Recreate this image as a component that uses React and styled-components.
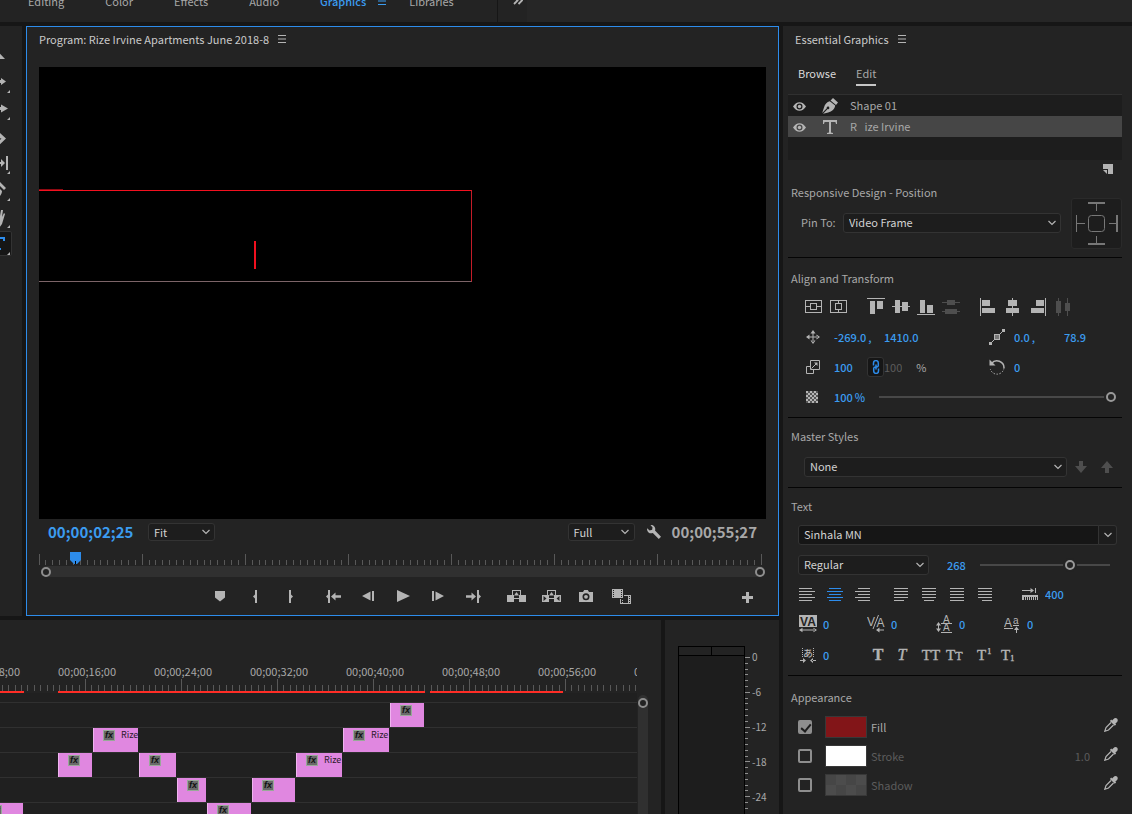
import { useState } from 'react';
import styled, { createGlobalStyle, css } from 'styled-components';

const GlobalStyle = createGlobalStyle`
  * {
    box-sizing: border-box;
  }

  body {
    margin: 0;
    background: #161616;
    color: #a8a8a8;
    font-family: 'Noto Sans CJK JP', 'Noto Sans', sans-serif;
    font-size: 11px;
    line-height: 16px;
    overflow: hidden;
  }

  button,
  input,
  select {
    font: inherit;
    color: inherit;
    margin: 0;
    padding: 0;
    border: 0;
    background: none;
  }

  svg {
    display: block;
    flex: none;
  }
`;

/* ---------- shell ---------- */

const Page = styled.div`
  display: flex;
  flex-direction: column;
  height: 100vh;
`;

const TopBar = styled.nav`
  display: flex;
  align-items: center;
  height: 40px;
  margin: -18px 0 4px;
  flex: none;
  background: #262626;
`;

const WorkspaceTabs = styled.div`
  display: flex;
  align-items: center;
  gap: 41px;
  height: 100%;
  padding: 0 43px 2px 28px;
  background: #232323;
  border-right: 1px solid #161616;
`;

const WorkspaceTab = styled.button`
  display: flex;
  align-items: center;
  gap: 12px;
  color: ${({ $active }) => ($active ? '#3b9cf0' : '#a8a8a8')};
  font-weight: ${({ $active }) => ($active ? 500 : 400)};
  margin-right: ${({ $active }) => ($active ? '-18px' : '0')};
`;

const MoreButton = styled.button`
  height: 100%;
  padding: 0 4px 2px 15px;
  background: #232323;
  color: #b4b4b4;
`;

const Main = styled.main`
  flex: 1;
  min-height: 0;
  display: flex;
  gap: 4px;
`;

const LeftArea = styled.div`
  flex: 1;
  min-width: 0;
  display: flex;
  flex-direction: column;
  gap: 4px;
`;

const UpperRow = styled.div`
  flex: 1;
  min-height: 0;
  display: flex;
  gap: 4px;
`;

const LowerRow = styled.div`
  height: 194px;
  display: flex;
  gap: 4px;
`;

/* ---------- tools ---------- */

const Toolbar = styled.div`
  width: 22px;
  flex: none;
  overflow: hidden;
  padding-top: 16px;
  display: flex;
  flex-direction: column;
  gap: 2px;
  background: #232323;
`;

const ToolButton = styled.button`
  width: 26px;
  height: 25px;
  flex: none;
  margin-left: -14px;
  border-radius: 2px;
  color: ${({ $active }) => ($active ? '#2d8ceb' : '#b4b4b4')};
  ${({ $active }) => $active && css`
    background: #161616;
    box-shadow: inset 0 0 0 1px #333;
  `}
`;

/* ---------- program monitor ---------- */

const PanelHeader = styled.header`
  display: flex;
  align-items: center;
  gap: 9px;
  height: 28px;
  flex: none;
  padding-bottom: 2px;
  color: #cacaca;
`;

const Program = styled.section`
  flex: 1;
  min-width: 0;
  display: flex;
  flex-direction: column;
  padding: 0 12px;
  background: #232323;
  border: 1px solid #2d8ceb;

  ${PanelHeader} {
    height: 26px;
  }
`;

const Heading = styled.h2`
  margin: 0;
  font-size: 11px;
  font-weight: 400;
`;

const MenuButton = styled.button`
  color: #b4b4b4;
`;

const Video = styled.div`
  position: relative;
  flex: 1;
  min-height: 0;
  margin-top: 14px;
  background: #000;
  overflow: hidden;
`;

const TextFrame = styled.div`
  position: absolute;
  left: 0;
  top: 123px;
  width: 433px;
  height: 92px;
  border: 1px solid #7c6468;
  border-top-color: #f3101f;
  border-right-color: #c41c28;
  border-left: 0;
`;

const TextFrameLead = styled.div`
  position: absolute;
  left: 0;
  top: -2px;
  width: 24px;
  height: 1px;
  background: #8d0a12;
`;

const Caret = styled.div`
  position: absolute;
  left: 215px;
  top: 50px;
  width: 2px;
  height: 28px;
  background: #f0101f;
`;

const MonitorInfo = styled.div`
  display: flex;
  align-items: center;
  height: 25px;
  flex: none;
  padding: 0 9px;
`;

const Timecode = styled.span`
  font-size: 15px;
  font-weight: 700;
  color: ${({ $active }) => ($active ? '#3b9cf0' : '#a8a8a8')};
  min-width: ${({ $active }) => ($active ? '100px' : '0')};
`;

const Spacer = styled.div`
  flex: ${({ $width }) => ($width ? `0 0 ${$width}px` : 1)};
`;

const WrenchButton = styled.button`
  margin: 0 11px 0 12px;
  color: #b4b4b4;
`;

const MonitorRuler = styled.div`
  position: relative;
  height: 22px;
  flex: none;
  padding: 10px 5px 0 0;
`;

const Playhead = styled.svg`
  position: absolute;
  top: 8px;
  left: 31px;
`;

const ZoomBar = styled.div`
  display: flex;
  justify-content: space-between;
  align-items: center;
  height: 11px;
  flex: none;
  margin: 0 1px 0 2px;
  background: #303030;
  border-radius: 6px;
`;

const Knob = styled.div`
  width: 10px;
  height: 10px;
  border: 2px solid #8e8e8e;
  border-radius: 50%;
  background: #232323;
`;

const Transport = styled.div`
  display: flex;
  align-items: center;
  height: 38px;
  flex: none;
`;

const TransportButtons = styled.div`
  flex: 1;
  display: flex;
  justify-content: center;
  gap: 8px;
  padding-left: 74px;
`;

const TransportGroup = styled.div`
  display: flex;
`;

const IconButton = styled.button`
  width: ${({ $width }) => $width || 35}px;
  height: 24px;
  display: flex;
  align-items: center;
  justify-content: center;
  color: ${({ $active, disabled }) => {
    if (disabled) return '#4e4e4e';
    return $active ? '#2d8ceb' : '#b4b4b4';
  }};
`;

/* ---------- form parts ---------- */

const SelectBox = styled.label`
  position: relative;
  display: block;
  flex: ${({ $width }) => ($width ? 'none' : 1)};
  width: ${({ $width }) => ($width ? `${$width}px` : 'auto')};
  height: ${({ $height }) => $height || 20}px;
  color: #d2d2d2;

  select {
    appearance: none;
    display: block;
    width: 100%;
    height: 100%;
    padding: 0 24px 2px 5px;
    background: ${({ $split }) => ($split ? '#161616' : '#1d1d1d')};
    border: 1px solid #333;
    border-radius: 3px;
  }
`;

const SelectArrow = styled.span`
  position: absolute;
  top: 0;
  right: 0;
  bottom: 0;
  width: 19px;
  display: flex;
  align-items: center;
  justify-content: center;
  pointer-events: none;
  color: #b4b4b4;
  ${({ $split }) => $split && css`
    background: #1d1d1d;
    border: 1px solid #333;
    border-radius: 0 3px 3px 0;
  `}
`;

const HotInput = styled.input`
  field-sizing: content;
  height: 16px;
  outline: 0;
  color: #3b9cf0;
  font-weight: 500;

  &:disabled {
    color: #5c5c5c;
    font-weight: 400;
  }
`;

const Slider = styled.input`
  appearance: none;
  flex: ${({ $width }) => ($width ? 'none' : 1)};
  width: ${({ $width }) => ($width ? `${$width}px` : 'auto')};
  min-width: 0;
  height: 12px;

  &::-webkit-slider-runnable-track {
    height: 2px;
    background: #484848;
  }

  &::-webkit-slider-thumb {
    appearance: none;
    width: 10px;
    height: 10px;
    margin-top: -4px;
    border: 2px solid #999;
    border-radius: 50%;
    background: #232323;
    box-shadow: 0 0 0 2px #232323;
  }
`;

const Checkbox = styled.input`
  appearance: none;
  position: relative;
  width: 14px;
  height: 14px;
  border: 2px solid #8e8e8e;
  border-radius: 2px;

  &:checked {
    background: #8e8e8e;
  }

  &:checked::after {
    content: '';
    position: absolute;
    left: 3px;
    top: 0;
    width: 4px;
    height: 8px;
    border: solid #1d1d1d;
    border-width: 0 2px 2px 0;
    transform: rotate(40deg);
  }
`;

/* ---------- timeline ---------- */

const Timeline = styled.section`
  flex: 1;
  min-width: 0;
  display: flex;
  padding-right: 13px;
  background: #232323;
`;

const TimelineBody = styled.div`
  flex: 1;
  min-width: 0;
  overflow: hidden;
  padding-top: 44px;
`;

const RulerLabels = styled.div`
  display: flex;
  height: 15px;
  margin-left: -57px;
  line-height: 14px;
`;

const RulerLabel = styled.span`
  width: 96px;
  flex: none;
  text-align: center;
`;

const Tracks = styled.div`
  padding-top: 9px;
  background: #202020;
`;

const Track = styled.div`
  position: relative;
  height: 25px;
  border-top: 1px solid #303030;
`;

const Clip = styled.div`
  position: absolute;
  top: 0;
  height: 24px;
  display: flex;
  align-items: flex-start;
  gap: 6px;
  padding: 2px 0 0 9px;
  overflow: hidden;
  background: #e087e0;
  border-left: 1px solid #f0b4f0;
  color: #2c1a2c;
  font-size: 9px;
  line-height: 10px;
`;

const FxBadge = styled.span`
  width: 12px;
  height: 11px;
  flex: none;
  background: #6a6a6a;
  border: 1px solid #98a898;
  color: #111;
  font-family: 'Liberation Sans', sans-serif;
  font-size: 9px;
  font-style: italic;
  font-weight: 700;
  line-height: 9px;
  text-align: center;
`;

const TrackScroll = styled.div`
  width: 10px;
  margin: 75px 0 0 1px;
  padding-top: 3px;
  background: #303030;
  border-radius: 5px 5px 0 0;
`;

/* ---------- audio meter ---------- */

const Meter = styled.section`
  width: 114px;
  display: flex;
  padding: 26px 0 0 13px;
  background: #232323;
`;

const MeterBox = styled.div`
  width: 67px;
  background: #1d1d1d;
  border: 1px solid #000;
  border-bottom: 0;
`;

const MeterPeaks = styled.div`
  display: grid;
  grid-template-columns: 32px 1fr;
  height: 9px;
  background: #232323;
  border-bottom: 1px solid #000;

  span + span {
    border-left: 1px solid #000;
  }
`;

const MeterLabels = styled.div`
  display: flex;
  flex-direction: column;
  gap: 21px;
  padding: 4px 0 0 1px;
  font-size: 10px;
  line-height: 14px;
`;

/* ---------- essential graphics ---------- */

const Graphics = styled.aside`
  width: 349px;
  flex: none;
  padding: 0 10px 0 5px;
  overflow: hidden;
  background: #232323;

  ${PanelHeader} {
    padding-left: 7px;
  }
`;

const Tabs = styled.div`
  display: flex;
  align-items: center;
  gap: 20px;
  height: 40px;
  padding-left: 10px;
`;

const Tab = styled.button`
  height: 24px;
  color: ${({ $active }) => ($active ? '#a8a8a8' : '#dadada')};
  border-bottom: 2px solid ${({ $active }) => ($active ? '#c6c6c6' : 'transparent')};
`;

const Layers = styled.div`
  min-height: 66px;
  background: #1d1d1d;
  border-top: 1px solid #303030;
`;

const Layer = styled.div`
  display: grid;
  grid-template-columns: 23px 37px 1fr;
  align-items: center;
  height: 21px;
  background: ${({ $selected }) => ($selected ? '#464646' : 'transparent')};
`;

const LayerIcon = styled.span`
  display: flex;
  justify-content: center;
  color: #b4b4b4;
`;

const LayerName = styled.span`
  padding: 0 0 2px 2px;
  white-space: pre;
`;

const LayerActions = styled.div`
  display: flex;
  justify-content: flex-end;
  height: 23px;
  padding: 4px 9px;
  color: #b4b4b4;
`;

const Section = styled.section`
  padding: ${({ $pad }) => $pad || '9px 0 0'};
  border-bottom: ${({ $last }) => ($last ? '0' : '1px solid #050505')};
`;

const SectionTitle = styled.h3`
  margin: 0;
  padding: 0 0 2px 3px;
  font-size: 11px;
  font-weight: 400;
  line-height: 18px;
`;

const Pinning = styled.div`
  display: flex;
  gap: 10px;
  height: 74px;
`;

const PinningFields = styled.div`
  flex: 1;
`;

const PinBox = styled.div`
  width: 51px;
  height: 51px;
  margin-top: 15px;
  background: #1d1d1d;
  border: 1px solid #2a2a2a;
  border-radius: 3px;
  color: #777;
`;

const Row = styled.div`
  display: flex;
  align-items: center;
  height: ${({ $height }) => $height || 30}px;
  margin-top: ${({ $top }) => $top || 0}px;
  padding: ${({ $pad }) => $pad || '0'};
`;

const PinLabel = styled.span`
  width: 42px;
  padding-bottom: 2px;
`;

const ButtonGroup = styled.div`
  display: flex;
  margin-right: ${({ $gap }) => $gap || 0}px;
`;

const TransformGrid = styled.div`
  display: grid;
  grid-template-columns: 183px 1fr;
  grid-auto-rows: 30px;
  padding-left: 18px;
`;

const Field = styled.div`
  display: flex;
  align-items: center;
  grid-column: ${({ $wide }) => ($wide ? '1 / -1' : 'auto')};
`;

const FieldIcon = styled.span`
  width: ${({ $width }) => $width || 28}px;
  flex: none;
  display: flex;
  justify-content: ${({ $center }) => ($center ? 'center' : 'flex-start')};
  color: #b4b4b4;
`;

const Value = styled.span`
  display: flex;
  align-items: center;
  width: ${({ $width }) => $width || 50}px;
  gap: ${({ $gap }) => $gap || 0}px;
  color: #3b9cf0;
  font-weight: 500;
`;

const LinkButton = styled.button`
  width: 17px;
  height: 20px;
  display: flex;
  align-items: center;
  justify-content: center;
  background: #161616;
  border: 1px solid #333;
  border-radius: 3px;
  color: #2d8ceb;
`;

const Percent = styled.span`
  margin-left: 14px;
`;

const AppearanceRows = styled.div`
  padding-top: 4px;
`;

const AppearanceRow = styled.div`
  display: flex;
  align-items: center;
  height: 29px;
  padding: 0 4px 0 10px;
  color: ${({ $on }) => ($on ? '#a8a8a8' : '#5c5c5c')};
`;

const Swatch = styled.button`
  width: 42px;
  height: 22px;
  margin: 0 4px 0 13px;
  border: 1px solid #383838;
  background: ${({ $fill }) => $fill};
`;

const StrokeWidth = styled(HotInput)`
  margin-right: 14px;
`;

const DropperButton = styled.button`
  padding-bottom: 4px;
  color: #b4b4b4;
`;

/* ---------- icons ---------- */

const Icon = ({ w, h, children }) => (
  <svg width={w} height={h} viewBox={`0 0 ${w} ${h}`} fill="currentColor" aria-hidden="true">
    {children}
  </svg>
);

const stroke = { fill: 'none', stroke: 'currentColor' };
const crisp = { shapeRendering: 'crispEdges' };

const MenuIcon = () => (
  <Icon w={8} h={8}>
    <path d="M0 0h8v1H0zM0 3.500h8v1H0zM0 7h8v1H0z" />
  </Icon>
);

const Chevron = () => (
  <Icon w={8} h={6}>
    <path d="M.5 1 4 4.500 7.500 1" {...stroke} strokeWidth="1.200" />
  </Icon>
);

const EyeIcon = () => (
  <Icon w={13} h={11}>
    <path fillRule="evenodd" d="M0 6.500C1.800 3.700 4 2.200 6.500 2.200S11.200 3.700 13 6.500C11.200 9.300 9 10.800 6.500 10.800S1.800 9.300 0 6.500zM6.500 3.500a3 3 0 1 0 0 6 3 3 0 0 0 0-6z" />
    <circle cx="6.500" cy="6.500" r="1.700" />
  </Icon>
);

const PenIcon = () => (
  <Icon w={16} h={16}>
    <path d="m11 0 5 4.500-2 2.500-5.500-4.500zM7.800 3.300l5.400 4.200c-.5 3.400-3.200 6.200-7 7L1 15.800l4.700-4.700a1.300 1.300 0 1 0-.9-.8L.2 15 2 9.500c.8-3.300 2.800-5.400 5.800-6.200z" />
  </Icon>
);

const TypeIcon = () => (
  <Icon w={14} h={14}>
    <path d="M0 0h14v4h-1l-.6-2H8v10.500l2 .5v1H4v-1l2-.5V2H1.600L1 4H0z" />
  </Icon>
);

const NewLayerIcon = () => (
  <Icon w={10} h={10}>
    <path d="M0 0h10v10H5V5H0z" />
    <path d="M0 6h4v4z" />
  </Icon>
);

const PinIcon = () => (
  <svg width="49" height="49" viewBox="0 0 49 49" fill="currentColor" aria-hidden="true">
    <rect x="16.5" y="16.5" width="16" height="16" rx="3" {...stroke} />
    <path {...crisp} d="M16 3h17v2H16zM24 5h1v7h-1zM16 44h17v2H16zM24 37h1v7h-1zM4 16h1v17H4zM5 24h8v1H5zM44 16h2v17h-2zM37 24h7v1h-7z" />
  </svg>
);

const alignFrame = [
  {
    label: 'Center vertically in frame',
    icon: <Icon w={17} h={13}><path {...stroke} {...crisp} d="M.5.5h16v12H.5zM5.500 3.500h6v6h-6zM1 6.500h4M12 6.500h4" /></Icon>,
  },
  {
    label: 'Center horizontally in frame',
    icon: <Icon w={17} h={13}><path {...stroke} {...crisp} d="M.5.5h16v12H.5zM5.500 3.500h6v6h-6zM8.500 1v2M8.500 10v2" /></Icon>,
  },
];

const alignVertical = [
  { label: 'Align top', d: 'M0 0h18v1H0zM3 3h5v13H3zM10 3h6v8h-6z' },
  { label: 'Align vertical centers', d: 'M0 8h18v1H0zM3 2h5v13H3zM10 4h6v9h-6z' },
  { label: 'Align bottom', d: 'M0 16h18v1H0zM3 2h5v13H3zM10 7h6v8h-6z' },
  { label: 'Distribute vertically', d: 'M0 4h18v1H0zM5 2h8v5H5zM0 13h18v1H0zM3 11h12v5H3z', disabled: true },
];

const alignHorizontal = [
  { label: 'Align left', d: 'M1 0h1v18H1zM3 2h8v6H3zM3 10h13v5H3z' },
  { label: 'Align horizontal centers', d: 'M8 0h1v18H8zM4 2h9v6H4zM2 10h13v5H2z' },
  { label: 'Align right', d: 'M16 0h1v18h-1zM7 2h8v6H7zM2 10h13v5H2z' },
  { label: 'Distribute horizontally', d: 'M4 0h1v18H4zM2 3h5v12H2zM13 0h1v18h-1zM11 5h5v8h-5z', disabled: true },
];

const PositionIcon = () => (
  <Icon w={14} h={14}>
    <path d="M6.500 2h1v10h-1zM2 6.500h10v1H2zM7 0l2.500 3.500h-5zM7 14l2.500-3.500h-5zM0 7l3.500-2.500v5zM14 7l-3.500-2.500v5z" />
  </Icon>
);

const AnchorIcon = () => (
  <Icon w={16} h={16}>
    <path d="M1 15 15 1" {...stroke} />
    <path d="M0 13h3v3H0zM13 0h3v3h-3z" />
    <rect x="5.500" y="5.500" width="5" height="5" fill="#777" stroke="currentColor" />
  </Icon>
);

const ScaleIcon = () => (
  <Icon w={14} h={14}>
    <path {...stroke} d="M4.500.5h9v9h-9zM4.500 6.500h-4v7h7v-4M5.500 8.500 10.500 3.500" />
    <path d="M8 2.500h3.500V6z" />
  </Icon>
);

const LinkIcon = () => (
  <Icon w={8} h={14}>
    <path {...stroke} strokeWidth="1.500" d="M1.500 5.500V3a2.300 2.300 0 0 1 4.800 0v2.500c0 1-.8 1.500-1.800 1.500M6.500 8.500V11a2.300 2.300 0 0 1-4.800 0V8.500C1.700 7.500 2.500 7 3.500 7M4 4.500v5" />
  </Icon>
);

const RotateIcon = () => (
  <Icon w={16} h={17}>
    <path {...stroke} strokeWidth="1.500" d="M2.500 4.500A7 7 0 0 1 15 9" />
    <path {...stroke} strokeDasharray="1.500 1.500" d="M15 9A7 7 0 0 1 1.300 10" />
    <path d="M.5.5v6h6z" />
  </Icon>
);

const OpacityIcon = () => {
  const cells = [];
  for (let y = 0; y < 6; y += 1) {
    for (let x = 0; x < 6; x += 1) {
      cells.push(<rect key={`${x}-${y}`} x={x * 2} y={y * 2} width="2" height="2" opacity={(x + y) % 2 ? 0.35 : 1} />);
    }
  }
  return <Icon w={12} h={12}>{cells}</Icon>;
};

const ArrowDown = () => (
  <Icon w={12} h={12}><path d="M4 0h4v5h4l-6 7-6-7h4z" /></Icon>
);

const ArrowUp = () => (
  <Icon w={12} h={12}><path d="M4 12h4V7h4L6 0 0 7h4z" /></Icon>
);

// each entry is [x, width] of one text line
const Lines = ({ rows }) => (
  <Icon w={16} h={13}>
    {rows.map(([x, width], i) => (
      <rect key={i} x={x} y={i * 3} width={width} height="1" {...crisp} />
    ))}
  </Icon>
);

const paragraphAligns = [
  { label: 'Left align text', rows: [[0, 13], [0, 16], [0, 13], [0, 16], [0, 13]] },
  { label: 'Center align text', rows: [[2, 12], [0, 16], [2, 12], [0, 16], [2, 12]] },
  { label: 'Right align text', rows: [[3, 12], [0, 15], [3, 12], [0, 15], [3, 12]] },
];

const paragraphJustifies = [
  { label: 'Justify last left', rows: [[1, 14], [1, 14], [1, 14], [1, 14], [1, 10]] },
  { label: 'Justify last centered', rows: [[1, 14], [1, 14], [1, 14], [1, 14], [3, 10]] },
  { label: 'Justify all', rows: [[1, 14], [1, 14], [1, 14], [1, 14], [1, 14]] },
  { label: 'Justify last right', rows: [[1, 14], [1, 14], [1, 14], [1, 14], [5, 10]] },
];

const TabWidthIcon = () => (
  <Icon w={16} h={13}>
    <path d="M0 2h10v1H0zM8.500 0 12 2.500 8.500 5zM13 0h1v5h-1z" />
    <path {...crisp} d="M0 7h16v5h-1v-3h-1v3h-1v-3h-1v3h-1v-3h-1v3H9v-3H8v3H7v-3H6v3H5v-3H4v3H3v-3H2v3H0z" />
  </Icon>
);

const glyph = { fontFamily: 'Liberation Sans, sans-serif' };

const TrackingIcon = () => (
  <Icon w={18} h={18}>
    <rect width="18" height="12" />
    <text x="9" y="10.500" textAnchor="middle" fontSize="12" fill="#232323" fontWeight="700" {...glyph}>VA</text>
    <path d="M2 14.500h14v1H2zM3.500 12.700v4.600L0 15zM14.500 12.700v4.600L18 15z" />
  </Icon>
);

const KerningIcon = () => (
  <Icon w={18} h={18}>
    <text x="0" y="11" fontSize="12" {...glyph}>V</text>
    <text x="9.500" y="12" fontSize="12" {...glyph}>A</text>
    <path {...stroke} d="M6 14 11.500 0" />
    <path d="M11 14.500h6v1h-6zM12.500 12.500v5L9 15z" />
  </Icon>
);

const LeadingIcon = () => (
  <Icon w={16} h={18}>
    <text x="7" y="7.500" fontSize="10" {...glyph}>A</text>
    <text x="7" y="16" fontSize="10" {...glyph}>A</text>
    <path {...crisp} d="M5 8h11v1H5zM5 17h11v1H5zM2 9h1v6H2z" />
    <path d="M0 10.500h5L2.500 7zM0 13.500h5L2.500 17z" />
  </Icon>
);

const BaselineIcon = () => (
  <Icon w={16} h={17}>
    <text x="0" y="11" fontSize="12" {...glyph}>A</text>
    <text x="9" y="8" fontSize="10" {...glyph}>a</text>
    <path {...crisp} d="M0 12h9v1H0zM9 9h6v1H9zM12 12h1v5h-1z" />
    <path d="M10 14h5l-2.500-3.500z" />
  </Icon>
);

const TsumeIcon = () => (
  <Icon w={16} h={15}>
    <path {...stroke} strokeDasharray="1 1" d="M2.500 0v10M13.500 0v10" />
    <text x="8" y="9" fontSize="10" textAnchor="middle" fontFamily="Noto Sans CJK JP, sans-serif">あ</text>
    <path d="M0 12h4v1H0zM3 10l3 2.500L3 15zM12 12h4v1h-4zM13 10l-3 2.500 3 2.500z" />
  </Icon>
);

const serif = { fontFamily: 'Liberation Serif, serif', fill: 'currentColor', stroke: 'currentColor', strokeWidth: '0.4' };

const textStyles = [
  [
    { label: 'Faux bold', icon: <Icon w={20} h={14}><text x="10" y="12" textAnchor="middle" fontSize="16" fontWeight="700" {...serif}>T</text></Icon> },
    { label: 'Faux italic', icon: <Icon w={20} h={14}><text x="10" y="12" textAnchor="middle" fontSize="16" fontStyle="italic" {...serif}>T</text></Icon> },
  ],
  [
    { label: 'All caps', icon: <Icon w={20} h={14}><text x="10" y="12" textAnchor="middle" fontSize="15" {...serif}>TT</text></Icon> },
    { label: 'Small caps', icon: <Icon w={20} h={14}><text x="1" y="12" fontSize="15" {...serif}>T<tspan fontSize="12">T</tspan></text></Icon> },
  ],
  [
    { label: 'Superscript', icon: <Icon w={20} h={14}><text x="3" y="12" fontSize="15" {...serif}>T<tspan fontSize="8" dx="1" dy="-6">1</tspan></text></Icon> },
    { label: 'Subscript', icon: <Icon w={20} h={14}><text x="3" y="12" fontSize="15" {...serif}>T<tspan fontSize="8" dy="1">1</tspan></text></Icon> },
  ],
];

const DropperIcon = () => (
  <Icon w={14} h={14}>
    <path d="M9.300 1.200c1.300-1.500 3-1.500 3.900-.5s.7 2.600-.6 3.900l-1.200 1 .7.8-1.300 1.300-4.900-4.800 1.300-1.300.9.8z" />
    <path {...stroke} strokeWidth="1.200" d="M7 4.500 2 9.500.8 13.200 4.500 12 9.500 7" />
  </Icon>
);

const WrenchIcon = () => (
  <Icon w={14} h={14}>
    <path d="M3.500.2A4 4 0 0 1 8 5.500l6 6.200-2.200 2.200-6-6A4 4 0 0 1 .2 3.300L2.600 5.400l2.600-.6.3-2.500z" />
  </Icon>
);

const transport = [
  [
    { label: 'Add marker', icon: <Icon w={10} h={11}><path d="M0 0h10v6.500L5 10.500 0 6.500z" /></Icon> },
    { label: 'Mark in', icon: <Icon w={5} h={13}><path d="M2 0h2v13H2V8.500L0 6.500l2-2z" /></Icon> },
    { label: 'Mark out', icon: <Icon w={5} h={13}><path d="M3 0H1v13h2V8.500l2-2-2-2z" /></Icon> },
  ],
  [
    { label: 'Go to in', icon: <Icon w={15} h={13}><path d="M2 0h2v13H2V8.500L0 6.500l2-2zM5 6.500 9.500 2.500v2.700H15v2.600H9.500v2.700z" /></Icon> },
    { label: 'Step back', icon: <Icon w={12} h={10}><path d="M0 5 8.500.5v9zM10 0h2v10h-2z" /></Icon> },
    { label: 'Play', icon: <Icon w={13} h={12}><path d="M0 0 13 6 0 12z" /></Icon> },
    { label: 'Step forward', icon: <Icon w={12} h={10}><path d="M12 5 3.500.5v9zM0 0h2v10H0z" /></Icon> },
    { label: 'Go to out', icon: <Icon w={15} h={13}><path d="M13 0h-2v13h2V8.500l2-2-2-2zM10 6.500 5.500 2.500v2.700H0v2.600h5.500v2.700z" /></Icon> },
  ],
  [
    {
      label: 'Lift',
      icon: (
        <Icon w={19} h={13}>
          <path d="M0 5h7v7H0zM12 5h7v7h-7zM9.500 2 7 5.500h5zM7 8h5v1H7z" />
          <path {...stroke} {...crisp} d="M5.500 5V.5h8V5" />
        </Icon>
      ),
    },
    {
      label: 'Extract',
      icon: (
        <Icon w={19} h={13}>
          <path fillRule="evenodd" d="M0 5h7v7H0zM1.500 6v5L4.500 8.500zM12 5h7v7h-7zM17.500 6v5l-3-2.500zM9.500 2 7 5.500h5zM7 8h5v1H7z" />
          <path {...stroke} {...crisp} d="M5.500 5V.5h8V5" />
        </Icon>
      ),
    },
    {
      label: 'Export frame',
      icon: (
        <Icon w={14} h={12}>
          <path fillRule="evenodd" d="M0 2h4l1.200-2h3.600L10 2h4v10H0zM7 3.300a3.500 3.500 0 1 0 0 7 3.500 3.500 0 0 0 0-7z" />
          <circle cx="7" cy="6.800" r="1.900" />
        </Icon>
      ),
    },
    {
      label: 'Comparison view',
      icon: (
        <Icon w={19} h={15}>
          <path fillRule="evenodd" d="M0 0h11v9H0zM1 1v1h1V1zM1 3v1h1V3zM1 5v1h1V5zM1 7v1h1V7zM9 1v1h1V1zM9 3v1h1V3zM9 5v1h1V5zM9 7v1h1V7z" />
          <path fillRule="evenodd" d="M12 6h7v9H8v-5h1v4h1v-1h1v1h5V7h-4zM17 7v1h1V7zM17 9v1h1V9zM17 11v1h1v-1zM17 13v1h1v-1zM10 11h1v1h-1z" />
        </Icon>
      ),
    },
  ],
];

const PlusIcon = () => (
  <Icon w={11} h={13}><path d="M4 2h3v4h4v3H7v4H4V9H0V6h4z" /></Icon>
);

const MoreIcon = () => (
  <Icon w={10} h={8}>
    <path {...stroke} strokeWidth="1.800" d="M1 0l3.500 3.500L1 7M5.500 0 9 3.500 5.500 7" />
  </Icon>
);

const corner = 'M24 21v3h-3z';

const tools = [
  { label: 'Selection', body: <path d="M5 2 19 17h-8l-6 6z" /> },
  { label: 'Track select forward', body: <path d={`M2 11h13V9l5 3.500-5 3.500v-2H2z${corner}`} /> },
  { label: 'Ripple edit', body: <path d={`M2 11h13V8.500l7 4-7 4V14H2z${corner}`} /> },
  { label: 'Razor', body: <path fillRule="evenodd" d="M3 17 12 8l8 7.500L11 24zM13 15v3l2.500-2.500z" /> },
  { label: 'Slip', body: <path d={`M4 12h11V9l4 4-4 4v-3H4zM20 6h2v14h-2z${corner}`} /> },
  { label: 'Pen', body: <path d={`m14 5 6 6-2 2-6-6zM10 8l6 6c0 3-2 6-6 8H6z${corner}`} /> },
  { label: 'Hand', body: <path d={`M6 11l2-1 2 4V5l2-1 2 8 1-6h2l-1 7 2-4 1 1-3 10-3 4H8z${corner}`} /> },
  { label: 'Type', active: true, body: <path d="M5 6h14v4h-2V8h-4v9h2v2H9v-2h2V8H7v2H5z" /> },
];

/* ---------- data ---------- */

const workspaces = ['Editing', 'Color', 'Effects', 'Audio', 'Graphics', 'Libraries'];

const timeLabels = [
  '00;00;08;00', '00;00;16;00', '00;00;24;00', '00;00;32;00',
  '00;00;40;00', '00;00;48;00', '00;00;56;00', '00;01;04;00',
];

const renderBars = [[0, 24], [58, 367], [430, 133]];

const tracks = [
  [{ x: 390, w: 34 }],
  [{ x: 93, w: 45, name: 'Rize' }, { x: 343, w: 46, name: 'Rize' }],
  [{ x: 58, w: 34 }, { x: 139, w: 37 }, { x: 296, w: 46, name: 'Rize' }],
  [{ x: 177, w: 29 }, { x: 252, w: 43 }],
  [{ x: -20, w: 43 }, { x: 207, w: 44 }],
];

const layers = [
  { name: 'Shape 01', icon: <PenIcon /> },
  { name: 'R   ize Irvine', icon: <TypeIcon />, selected: true },
];

const checker = 'repeating-conic-gradient(#4c4c4c 0 25%, #464646 0 50%) 0 0 / 20px 20px';

const range = (n) => Array.from({ length: n }, (_, i) => i);

/* ---------- components ---------- */

const Select = ({ label, value, width, height, split }) => (
  <SelectBox $width={width} $height={height} $split={split}>
    <select aria-label={label} defaultValue={value}>
      <option>{value}</option>
    </select>
    <SelectArrow $split={split}><Chevron /></SelectArrow>
  </SelectBox>
);

const AlignButtons = ({ items, gap }) => (
  <ButtonGroup $gap={gap}>
    {items.map((item) => (
      <IconButton key={item.label} $width={25} aria-label={item.label} disabled={item.disabled}>
        {item.icon || <Icon w={18} h={18}><path d={item.d} {...crisp} /></Icon>}
      </IconButton>
    ))}
  </ButtonGroup>
);

const TypeField = ({ label, icon, value }) => (
  <Value $width={68}>
    <FieldIcon $width={30} $center>{icon}</FieldIcon>
    <HotInput aria-label={label} defaultValue={value} />
  </Value>
);

const ProgramPanel = () => (
  <Program>
    <PanelHeader>
      <Heading>Program: Rize Irvine Apartments June 2018-8</Heading>
      <MenuButton aria-label="Panel menu"><MenuIcon /></MenuButton>
    </PanelHeader>
    <Video>
      <TextFrame>
        <TextFrameLead />
        <Caret />
      </TextFrame>
    </Video>
    <MonitorInfo>
      <Timecode $active>00;00;02;25</Timecode>
      <Select label="Zoom level" value="Fit" width={67} height={18} />
      <Spacer />
      <Select label="Playback resolution" value="Full" width={67} height={18} />
      <WrenchButton aria-label="Settings"><WrenchIcon /></WrenchButton>
      <Timecode>00;00;55;27</Timecode>
    </MonitorInfo>
    <MonitorRuler>
      <svg width="100%" height="11" overflow="visible">
        {range(106).map((i) => (
          <line
            key={i}
            x1={`${(i / 105) * 100}%`}
            x2={`${(i / 105) * 100}%`}
            y1={i % 15 ? 6 : 0}
            y2="11"
            stroke="#585858"
            {...crisp}
          />
        ))}
      </svg>
      <Playhead width="11" height="12" viewBox="0 0 11 12">
        <path d="M0 0h11v8l-4 4H4L0 8z" fill="#2d8ceb" />
        <path d="M5 9h1v3H5z" fill="#000" />
      </Playhead>
    </MonitorRuler>
    <ZoomBar>
      <Knob />
      <Knob />
    </ZoomBar>
    <Transport>
      <TransportButtons>
        {transport.map((group, i) => (
          <TransportGroup key={i}>
            {group.map(({ label, icon }) => (
              <IconButton key={label} aria-label={label}>{icon}</IconButton>
            ))}
          </TransportGroup>
        ))}
      </TransportButtons>
      <IconButton aria-label="Button editor" $width={38}><PlusIcon /></IconButton>
    </Transport>
  </Program>
);

const TimelinePanel = () => (
  <Timeline>
    <TimelineBody>
      <RulerLabels>
        {timeLabels.map((label) => <RulerLabel key={label}>{label}</RulerLabel>)}
      </RulerLabels>
      <svg width="100%" height="14">
        {range(102).map((i) => (
          <rect
            key={i}
            x={Math.round(i * 6.4 - 11)}
            y={i % 15 ? 6 : 0}
            width="1"
            height={i % 15 ? 6 : 12}
            fill="#585858"
          />
        ))}
        {renderBars.map(([x, w]) => <rect key={x} x={x} y="12" width={w} height="2" fill="#ff2d26" />)}
      </svg>
      <Tracks>
        {tracks.map((clips, i) => (
          <Track key={i}>
            {clips.map(({ x, w, name }) => (
              <Clip key={x} style={{ left: x, width: w }}>
                <FxBadge>fx</FxBadge>
                {name}
              </Clip>
            ))}
          </Track>
        ))}
      </Tracks>
    </TimelineBody>
    <TrackScroll><Knob /></TrackScroll>
  </Timeline>
);

const MeterPanel = () => (
  <Meter>
    <MeterBox>
      <MeterPeaks><span /><span /></MeterPeaks>
    </MeterBox>
    <svg width="6" height="168" fill="#8e8e8e">
      {range(27).map((i) => (
        <rect key={i} x="0" y={Math.round(11 + i * 5.8)} width={i % 6 ? 3 : 5} height="1" />
      ))}
    </svg>
    <MeterLabels>
      {['0', '-6', '-12', '-18', '-24'].map((db) => <span key={db}>{db}</span>)}
    </MeterLabels>
  </Meter>
);

const GraphicsPanel = () => {
  const [appearance, setAppearance] = useState({ Fill: true, Stroke: false, Shadow: false });
  const swatches = { Fill: '#821518', Stroke: '#fff', Shadow: checker };

  return (
    <Graphics>
      <PanelHeader>
        <Heading>Essential Graphics</Heading>
        <MenuButton aria-label="Panel menu"><MenuIcon /></MenuButton>
      </PanelHeader>
      <Tabs>
        <Tab>Browse</Tab>
        <Tab $active>Edit</Tab>
      </Tabs>
      <Layers>
        {layers.map(({ name, icon, selected }) => (
          <Layer key={name} $selected={selected}>
            <LayerIcon><EyeIcon /></LayerIcon>
            <LayerIcon>{icon}</LayerIcon>
            <LayerName>{name}</LayerName>
          </Layer>
        ))}
      </Layers>
      <LayerActions><NewLayerIcon /></LayerActions>

      <Section $pad="0">
        <Pinning>
          <PinningFields>
            <SectionTitle>Responsive Design - Position</SectionTitle>
            <Row $height={40} $pad="0 0 0 13px">
              <PinLabel>Pin To:</PinLabel>
              <Select label="Pin To" value="Video Frame" />
            </Row>
          </PinningFields>
          <PinBox><PinIcon /></PinBox>
        </Pinning>
      </Section>

      <Section $pad="11px 0 5px">
        <SectionTitle>Align and Transform</SectionTitle>
        <Row $top={2} $height={31} $pad="0 0 0 13px">
          <AlignButtons items={alignFrame} gap={12} />
          <AlignButtons items={alignVertical} gap={12} />
          <AlignButtons items={alignHorizontal} />
        </Row>
        <TransformGrid>
          <Field>
            <FieldIcon><PositionIcon /></FieldIcon>
            <Value $gap={2}><HotInput aria-label="Position X" defaultValue="-269.0" />,</Value>
            <HotInput aria-label="Position Y" defaultValue="1410.0" />
          </Field>
          <Field>
            <FieldIcon $width={25}><AnchorIcon /></FieldIcon>
            <Value $gap={2}><HotInput aria-label="Anchor X" defaultValue="0.0" />,</Value>
            <HotInput aria-label="Anchor Y" defaultValue="78.9" />
          </Field>
          <Field>
            <FieldIcon><ScaleIcon /></FieldIcon>
            <Value $width={33}><HotInput aria-label="Scale" defaultValue="100" /></Value>
            <LinkButton aria-label="Set scale lock"><LinkIcon /></LinkButton>
            <HotInput aria-label="Scale width" defaultValue="100" disabled />
            <Percent>%</Percent>
          </Field>
          <Field>
            <FieldIcon $width={25}><RotateIcon /></FieldIcon>
            <HotInput aria-label="Rotation" defaultValue="0" />
          </Field>
          <Field $wide>
            <FieldIcon><OpacityIcon /></FieldIcon>
            <Value $width={45} $gap={2}><HotInput aria-label="Opacity" defaultValue="100" />%</Value>
            <Slider type="range" aria-label="Opacity slider" defaultValue="100" />
            <Spacer $width={6} />
          </Field>
        </TransformGrid>
      </Section>

      <Section>
        <SectionTitle>Master Styles</SectionTitle>
        <Row $height={40} $pad="0 3px 0 16px">
          <Select label="Master Styles" value="None" />
          <IconButton $width={28} aria-label="Push from track" disabled><ArrowDown /></IconButton>
          <IconButton $width={24} aria-label="Push to master" disabled><ArrowUp /></IconButton>
        </Row>
      </Section>

      <Section $pad="9px 0 5px">
        <SectionTitle>Text</SectionTitle>
        <Row $top={3} $pad="0 5px 0 10px">
          <Select label="Font" value="Sinhala MN" split />
        </Row>
        <Row $pad="0 12px 0 10px">
          <Select label="Font style" value="Regular" width={131} />
          <Spacer $width={18} />
          <HotInput aria-label="Font size" defaultValue="268" />
          <Spacer />
          <Slider type="range" aria-label="Font size slider" defaultValue="71" $width={130} />
        </Row>
        <Row $height={28} $pad="0 0 0 5px">
          <ButtonGroup $gap={10}>
            {paragraphAligns.map(({ label, rows }, i) => (
              <IconButton key={label} $width={28} aria-label={label} $active={i === 1}><Lines rows={rows} /></IconButton>
            ))}
          </ButtonGroup>
          <ButtonGroup $gap={16}>
            {paragraphJustifies.map(({ label, rows }) => (
              <IconButton key={label} $width={28} aria-label={label}><Lines rows={rows} /></IconButton>
            ))}
          </ButtonGroup>
          <FieldIcon $width={30} $center><TabWidthIcon /></FieldIcon>
          <HotInput aria-label="Tab width" defaultValue="400" />
        </Row>
        <Row $height={32} $pad="0 0 0 5px">
          <TypeField label="Tracking" icon={<TrackingIcon />} value="0" />
          <TypeField label="Kerning" icon={<KerningIcon />} value="0" />
          <TypeField label="Leading" icon={<LeadingIcon />} value="0" />
          <TypeField label="Baseline shift" icon={<BaselineIcon />} value="0" />
        </Row>
        <Row $pad="0 0 0 5px">
          <TypeField label="Tsume" icon={<TsumeIcon />} value="0" />
          <Spacer $width={5} />
          {textStyles.map((group, i) => (
            <ButtonGroup key={i} $gap={5}>
              {group.map(({ label, icon }) => (
                <IconButton key={label} $width={24} aria-label={label}>{icon}</IconButton>
              ))}
            </ButtonGroup>
          ))}
        </Row>
      </Section>

      <Section $pad="12px 0 0" $last>
        <SectionTitle>Appearance</SectionTitle>
        <AppearanceRows>
          {Object.keys(appearance).map((name) => (
            <AppearanceRow key={name} $on={appearance[name]}>
              <Checkbox
                type="checkbox"
                id={name}
                checked={appearance[name]}
                onChange={() => setAppearance({ ...appearance, [name]: !appearance[name] })}
              />
              <Swatch aria-label={`${name} color`} $fill={swatches[name]} />
              <label htmlFor={name}>{name}</label>
              <Spacer />
              {name === 'Stroke' && <StrokeWidth aria-label="Stroke width" defaultValue="1.0" disabled />}
              <DropperButton aria-label={`Pick ${name} color`}><DropperIcon /></DropperButton>
            </AppearanceRow>
          ))}
        </AppearanceRows>
      </Section>
    </Graphics>
  );
};

const App = () => (
  <Page>
    <GlobalStyle />
    <TopBar>
      <WorkspaceTabs>
        {workspaces.map((name) => (
          <WorkspaceTab key={name} $active={name === 'Graphics'}>
            {name}
            {name === 'Graphics' && <MenuIcon />}
          </WorkspaceTab>
        ))}
      </WorkspaceTabs>
      <MoreButton aria-label="More workspaces"><MoreIcon /></MoreButton>
    </TopBar>
    <Main>
      <LeftArea>
        <UpperRow>
          <Toolbar>
            {tools.map(({ label, body, active }) => (
              <ToolButton key={label} aria-label={label} $active={active}>
                <Icon w={26} h={25}>
                  {body}
                  {active && <path d={corner} fill="#b4b4b4" />}
                </Icon>
              </ToolButton>
            ))}
          </Toolbar>
          <ProgramPanel />
        </UpperRow>
        <LowerRow>
          <TimelinePanel />
          <MeterPanel />
        </LowerRow>
      </LeftArea>
      <GraphicsPanel />
    </Main>
  </Page>
);

export default App;
